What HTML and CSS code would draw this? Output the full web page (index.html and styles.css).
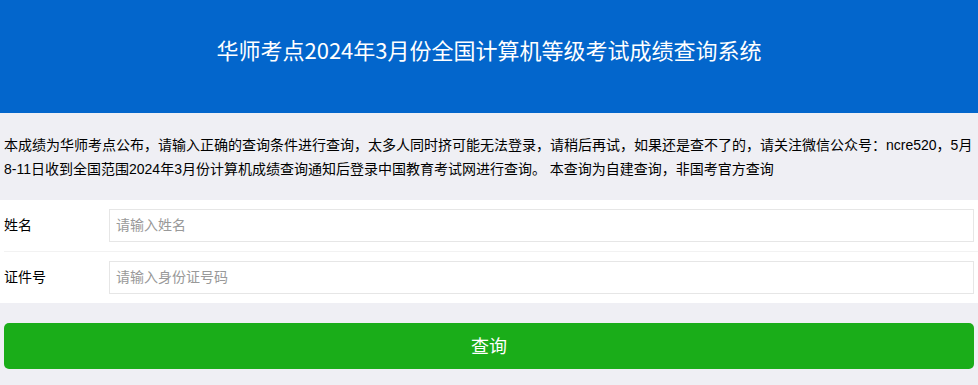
FILE: index.html
```html
<!DOCTYPE html>
<html lang="zh-CN">
<head>
    <meta charset="UTF-8">
    <meta name="viewport" content="width=device-width, initial-scale=1.0">
    <title>成绩查询</title>
    <link rel="stylesheet" href="styles.css">
</head>
<body>

    <div class="header">
        <h1>华师考点2024年3月份全国计算机等级考试成绩查询系统</h1>
    </div>

    <div class="notice">
        本成绩为华师考点公布，请输入正确的查询条件进行查询，太多人同时挤可能无法登录，请稍后再试，如果还是查不了的，请关注微信公众号：ncre520，5月8-11日收到全国范围2024年3月份计算机成绩查询通知后登录中国教育考试网进行查询。 本查询为自建查询，非国考官方查询
    </div>

    <div class="form-cells">
        <div class="cell">
            <label class="cell-label" for="name">姓名</label>
            <input type="text" id="name" class="cell-input" placeholder="请输入姓名">
        </div>
        <div class="cell">
            <label class="cell-label" for="idcard">证件号</label>
            <input type="text" id="idcard" class="cell-input" placeholder="请输入身份证号码">
        </div>
    </div>

    <div class="btn-area">
        <button class="btn-primary">查询</button>
    </div>

</body>
</html>
```

FILE: styles.css
```css
body {
    margin: 0;
    padding: 0;
    background-color: #efeff4;
    font-family: "Liberation Sans", "Noto Sans CJK SC", sans-serif;
    color: #000;
}

.header {
    background-color: #0366cc;
    height: 113px;
    display: flex;
    justify-content: center;
    align-items: center;
}

.header h1 {
    margin: 0;
    color: #fff;
    font-family: "Noto Sans CJK SC", sans-serif;
    font-size: 22px;
    font-weight: normal;
    padding-bottom: 16px;
}

.notice {
    padding: 20px 4px 18px 4px;
    font-size: 14px;
    line-height: 24px;
}

.form-cells {
    margin-top: 1px;
    background-color: #fff;
}

.cell {
    display: flex;
    align-items: center;
    padding: 9px 4px;
}

.cell + .cell {
    border-top: 1px solid #f2f2f2;
    margin-left: 4px;
    padding-left: 0;
}

.cell-label {
    width: 105px;
    font-size: 14px;
    padding-bottom: 4px;
}

.cell-input {
    flex: 1;
    height: 33px;
    box-sizing: border-box;
    border: 1px solid #e6e6e6;
    padding: 0 6px 2px 6px;
    font-size: 14px;
    font-family: "Liberation Sans", "Noto Sans CJK SC", sans-serif;
    outline: none;
}

.cell-input::placeholder {
    color: #999;
}

.btn-area {
    padding: 20px 4px 16px 4px;
}

.btn-primary {
    width: 100%;
    height: 46px;
    border: none;
    border-radius: 5px;
    background-color: #1aad19;
    color: #fff;
    font-size: 18px;
    font-family: "Liberation Sans", "Noto Sans CJK SC", sans-serif;
    padding-bottom: 3px;
    cursor: pointer;
}
```
